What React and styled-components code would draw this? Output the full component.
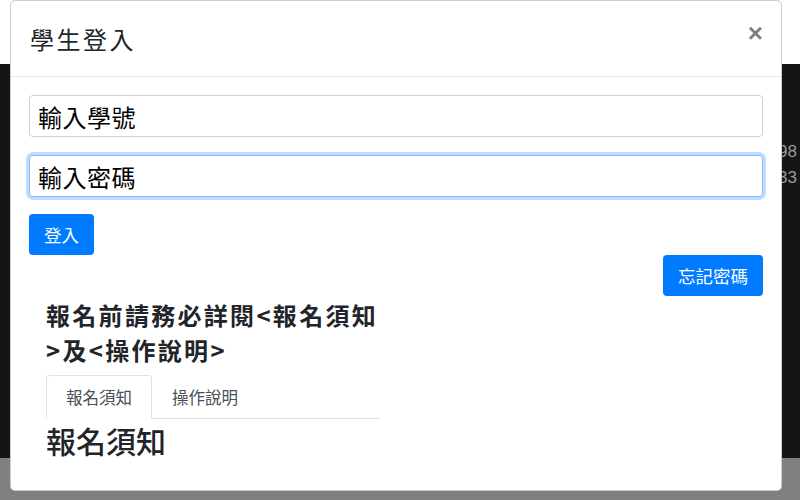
import React from 'react';
import styled, { createGlobalStyle } from 'styled-components';

const GlobalStyle = createGlobalStyle`
    html, body {
        margin: 0;
        padding: 0;
        width: 800px;
        height: 500px;
        overflow: hidden;
        font-family: "Noto Sans CJK TC", "Noto Sans", sans-serif;
    }
`;

const Page = styled.div`
    position: relative;
    width: 800px;
    height: 500px;
    display: flex;
    flex-direction: column;
`;

const TopStrip = styled.div`
    height: 64px;
    background: #fff;
`;

const DarkBand = styled.div`
    height: 394px;
    background: #151515;
    display: flex;
    flex-direction: column;
    align-items: flex-end;
    padding: 77px 3px 0 0;
    box-sizing: border-box;
    row-gap: 4px;
`;

const Stat = styled.span`
    font-family: "Liberation Sans", Arial, sans-serif;
    font-size: 17px;
    line-height: 22px;
    color: #9a9a9a;
`;

const BottomStrip = styled.div`
    flex: 1;
    background: #808080;
`;

const Modal = styled.div`
    position: absolute;
    left: 10px;
    top: 0;
    width: 772px;
    height: 491px;
    box-sizing: border-box;
    background: #fff;
    border: 1px solid rgba(0, 0, 0, 0.2);
    border-radius: 5px;
    display: flex;
    flex-direction: column;
`;

const Header = styled.div`
    height: 76px;
    box-sizing: border-box;
    border-bottom: 1px solid #e9ecef;
    display: flex;
    justify-content: space-between;
    align-items: flex-start;
    padding: 22px 18px 0 19px;
`;

const Title = styled.h4`
    margin: 0;
    font-size: 24px;
    line-height: 32px;
    font-weight: 400;
    letter-spacing: 2.5px;
    color: #212529;
`;

const Close = styled.button`
    border: none;
    background: transparent;
    padding: 0;
    margin-top: -2px;
    font-family: "Liberation Sans", Arial, sans-serif;
    font-size: 26px;
    font-weight: 700;
    line-height: 24px;
    color: #000;
    opacity: 0.5;
`;

const Body = styled.div`
    flex: 1;
    padding: 18px 18px 0 18px;
    display: flex;
    flex-direction: column;
`;

const Input = styled.input`
    height: 42px;
    box-sizing: border-box;
    border: 1px solid #ced4da;
    border-radius: 4px;
    padding: 0 8px;
    font-family: "Noto Sans CJK TC", serif;
    font-size: 24px;
    letter-spacing: 0.5px;
    color: #000;
    margin-bottom: ${(p) => p.$mb || 18}px;
    outline: none;
    ${(p) => p.$focus && `
        border-color: #80bdff;
        box-shadow: 0 0 0 3px rgba(0, 123, 255, 0.25);
    `}
    &::placeholder {
        color: #000;
    }
`;

const ButtonRow = styled.div`
    display: flex;
    justify-content: ${(p) => (p.$right ? 'flex-end' : 'flex-start')};
`;

const Button = styled.button`
    height: 41px;
    padding: 0 15px;
    border: none;
    border-radius: 4px;
    background: #007bff;
    color: #fff;
    font-family: "Noto Sans CJK TC", sans-serif;
    font-size: 17.5px;
    line-height: 41px;
`;

const Notice = styled.div`
    width: 334px;
    margin-left: 17px;
    margin-top: 1px;
`;

const NoticeTitle = styled.h3`
    margin: 0;
    font-size: 24px;
    line-height: 35px;
    font-weight: 700;
    letter-spacing: 2.3px;
    color: #212529;
`;

const Tabs = styled.div`
    display: flex;
    margin-top: 8px;
    border-bottom: 1px solid #dee2e6;
`;

const Tab = styled.div`
    height: 44px;
    box-sizing: border-box;
    padding: 0 19px;
    margin-bottom: -1px;
    display: flex;
    align-items: center;
    font-size: 16.5px;
    color: #495057;
    border: 1px solid ${(p) => (p.$active ? '#dee2e6' : 'transparent')};
    border-bottom-color: ${(p) => (p.$active ? '#fff' : 'transparent')};
    border-radius: 4px 4px 0 0;
    background: ${(p) => (p.$active ? '#fff' : 'transparent')};
`;

const Section = styled.h2`
    margin: 3px 0 0;
    font-size: 30px;
    line-height: 36px;
    font-weight: 500;
    color: #212529;
`;

export default function App() {
    return (
        <>
            <GlobalStyle />
            <Page>
                <TopStrip />
                <DarkBand>
                    <Stat>1998</Stat>
                    <Stat>2033</Stat>
                </DarkBand>
                <BottomStrip />
                <Modal>
                    <Header>
                        <Title>學生登入</Title>
                        <Close>×</Close>
                    </Header>
                    <Body>
                        <Input placeholder="輸入學號" />
                        <Input placeholder="輸入密碼" type="password" $focus $mb={17} />
                        <ButtonRow>
                            <Button>登入</Button>
                        </ButtonRow>
                        <ButtonRow $right>
                            <Button>忘記密碼</Button>
                        </ButtonRow>
                        <Notice>
                            <NoticeTitle>報名前請務必詳閱&lt;報名須知&gt;及&lt;操作說明&gt;</NoticeTitle>
                            <Tabs>
                                <Tab $active>報名須知</Tab>
                                <Tab>操作說明</Tab>
                            </Tabs>
                            <Section>報名須知</Section>
                        </Notice>
                    </Body>
                </Modal>
            </Page>
        </>
    );
}
